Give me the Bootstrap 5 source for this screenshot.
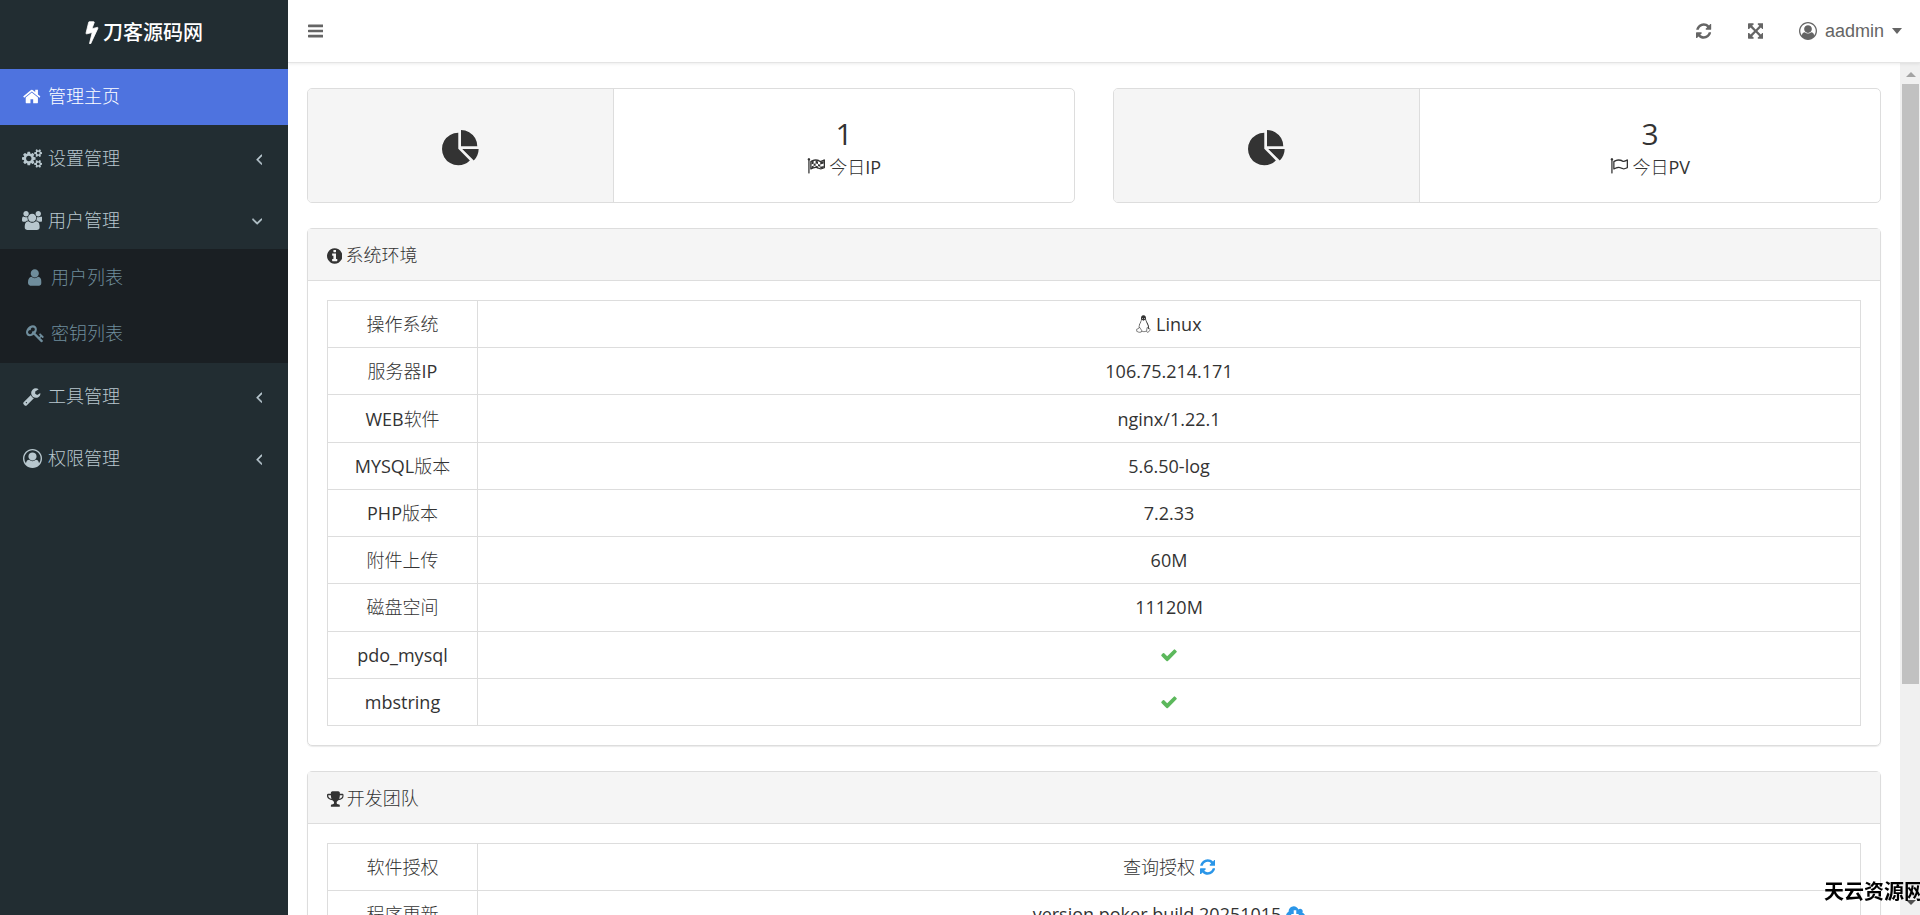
<!DOCTYPE html>
<html lang="zh-CN">
<head>
<meta charset="utf-8">
<meta name="viewport" content="width=device-width, initial-scale=1">
<title>刀客源码网 - 管理主页</title>
<link href="https://cdn.jsdelivr.net/npm/bootstrap@5.3.0/dist/css/bootstrap.min.css" rel="stylesheet">
<style>
  body { font-family: "Open Sans", "Noto Sans CJK SC Light", "Noto Sans CJK SC DemiLight", "Noto Sans CJK SC", sans-serif; font-size: 18px; color: #333; background: #fff; }
  .ico { height: 18px; fill: currentColor; flex: none; }
  a { color: inherit; text-decoration: none; }

  /* Sidebar */
  .side { width: 288px; background: #222d32; color: #b8c7ce; }
  .brand { height: 69px; padding-bottom: 6px; color: #fff; font-family: "Noto Sans CJK SC", sans-serif; font-size: 20px; font-weight: 500; }
  .brand .ico { height: 24px; }
  .menu > li + li { margin-top: 6px; }
  .menu a { height: 56px; padding: 0 26px 1px 21px; }
  .menu a.current { background: #4e73df; color: #fff; }
  .menu-ico { width: 22px; margin-right: 5px; }
  .menu-ico .ico { height: 19px; }
  .submenu { background: #1a1f23; color: #6f8d9c; padding: 1px 0; }
  .submenu a { padding-left: 24px; }

  /* Top bar */
  .topbar { height: 63px; padding: 0 18px 0 20px; color: #656565; border-bottom: 1px solid #e4e4e4; box-shadow: 0 1px 3px rgba(0,0,0,.08); font: 18px "Liberation Sans", Arial, sans-serif; z-index: 1; }
  .topbar button { background: none; border: 0; padding: 0; color: inherit; }
  .topbar .full-btn { margin: 0 36px; }
  .caret-down { border: 5px solid transparent; border-top: 6px solid; border-bottom: 0; margin-left: 8px; }

  /* Page */
  .page { padding: 25px 19px 0; }
  .stats { gap: 38px; }
  .panel { border: 1px solid #ddd; border-radius: 5px; margin-bottom: 25px; }
  .panel-shadow { box-shadow: 0 1px 1px rgba(0,0,0,.08); }
  .stat { height: 115px; margin-bottom: 25px; }
  .stat > div { padding-top: 7px; }
  .stat-icon { width: 40%; background: #f5f5f5; border-right: 1px solid #ddd; }
  .stat-icon .ico { height: 38px; }
  .stat-num { font-size: 30px; line-height: 36px; }
  .stat-label { line-height: 30px; }
  .panel-title { height: 52px; padding: 2px 19px 0; gap: 3px; background: #f5f5f5; border-bottom: 1px solid #ddd; font-size: 18px; }
  .panel-content { padding: 19px; }
  .info { border-color: #ddd; text-align: center; }
  .info-env { height: 426px; }
  .info > tbody > tr > * { padding: 8px; line-height: 30px; vertical-align: middle; color: #333; font-weight: 400; border-color: #ddd; }
  .info th { width: 150px; white-space: nowrap; }
  .info .ico { vertical-align: -2px; }
  .info .ok { color: #5cb85c; }
  .info .act { color: #2b96e8; }

  /* Scroll rail */
  .rail { width: 20px; background: #f0f0f0; padding: 9px 1px 10px 2px; }
  .rail-up, .rail-down { border: 5px solid transparent; }
  .rail-up { border-top: 0; border-bottom-color: #a3a3a3; }
  .rail-down { border-bottom: 0; border-top-color: #505050; }
  .rail-thumb { width: 17px; background: #c1c1c1; margin-top: 7px; height: 72%; }
  .sitemark { right: -4px; bottom: 9px; font-family: "Noto Sans CJK SC", sans-serif; font-size: 20px; line-height: 30px; font-weight: 700; color: #000; z-index: 5; white-space: nowrap; }
</style>
</head>
<body class="vh-100 overflow-hidden d-flex">

<svg class="d-none" aria-hidden="true">
  <symbol id="bolt" viewBox="448 0 896 1792"><path d="M1333 566q18 20 7 44l-540 1157q-13 25-42 25-4 0-14-2-17-5-25.5-19t-4.500-30l197-808-406 101q-4 1-12 1-18 0-31-11-18-15-13-39l201-825q4-14 16-23t28-9h328q19 0 32 12.500t13 29.500q0 8-5 18l-171 463 396-98q8-2 12-2 19 0 34 15z" stroke="#fff" stroke-width="60"/></symbol>
  <symbol id="home" viewBox="64 0 1664 1792"><path d="M1472 992v480q0 26-19 45t-45 19h-384v-384h-256v384h-384q-26 0-45-19t-19-45v-480q0-1 .5-3t.5-3l575-474 575 474q1 2 1 6zm223-69l-62 74q-8 9-21 11h-3q-13 0-21-7l-692-577-692 577q-12 8-24 7-13-2-21-11l-62-74q-8-10-7-23.500t11-21.500l719-599q32-26 76-26t76 26l244 204v-195q0-14 9-23t23-9h192q14 0 23 9t9 23v408l219 182q10 8 11 21.500t-7 23.500z"/></symbol>
  <symbol id="cogs" viewBox="-64 0 1920 1792"><path d="M832 896q0-106-75-181t-181-75-181 75-75 181 75 181 181 75 181-75 75-181zm768 512q0-52-38-90t-90-38-90 38-38 90q0 53 37.500 90.500t90.500 37.500 90.500-37.500 37.500-90.500zm0-1024q0-52-38-90t-90-38-90 38-38 90q0 53 37.500 90.500t90.500 37.500 90.500-37.500 37.500-90.500zm-384 421v185q0 10-7 19.500t-16 10.500l-155 24q-11 35-32 76 34 48 90 115 7 11 7 20 0 12-7 19-23 30-82.500 89.500t-78.500 59.500q-11 0-21-7l-115-90q-37 19-77 31-11 108-23 155-7 24-30 24h-186q-11 0-20-7.500t-10-17.500l-23-153q-34-10-75-31l-118 89q-7 7-20 7-11 0-21-8-144-133-144-160 0-9 7-19 10-14 41-53t47-61q-23-44-35-82l-152-24q-10-1-17-9.500t-7-19.500v-185q0-10 7-19.500t16-10.500l155-24q11-35 32-76-34-48-90-115-7-11-7-20 0-12 7-20 22-30 82-89t79-59q11 0 21 7l115 90q34-18 77-32 11-108 23-154 7-24 30-24h186q11 0 20 7.500t10 17.500l23 153q34 10 75 31l118-89q8-7 20-7 11 0 21 8 144 133 144 160 0 8-7 19-12 16-42 54t-45 60q23 48 34 82l152 23q10 2 17 10.500t7 19.500zm640 533v140q0 16-149 31-12 27-30 52 51 113 51 138 0 4-4 7-122 71-124 71-8 0-46-47t-52-68q-20 2-30 2t-30-2q-14 21-52 68t-46 47q-2 0-124-71-4-3-4-7 0-25 51-138-18-25-30-52-149-15-149-31v-140q0-16 149-31 13-29 30-52-51-113-51-138 0-4 4-7 4-2 35-20t59-34 30-16q8 0 46 46.500t52 67.500q20-2 30-2t30 2q51-71 92-112l6-2q4 0 124 70 4 3 4 7 0 25-51 138 17 23 30 52 149 15 149 31zm0-1024v140q0 16-149 31-12 27-30 52 51 113 51 138 0 4-4 7-122 71-124 71-8 0-46-47t-52-68q-20 2-30 2t-30-2q-14 21-52 68t-46 47q-2 0-124-71-4-3-4-7 0-25 51-138-18-25-30-52-149-15-149-31v-140q0-16 149-31 13-29 30-52-51-113-51-138 0-4 4-7 4-2 35-20t59-34 30-16q8 0 46 46.500t52 67.500q20-2 30-2t30 2q51-71 92-112l6-2q4 0 124 70 4 3 4 7 0 25-51 138 17 23 30 52 149 15 149 31z"/></symbol>
  <symbol id="users" viewBox="-64 0 1920 1792"><path d="M529 896q-162 5-265 128h-134q-82 0-138-40.500t-56-118.500q0-353 124-353 6 0 43.500 21t97.500 42.500 119 21.500q67 0 133-23-5 37-5 66 0 139 81 256zm1071 637q0 120-73 189.500t-194 69.500h-874q-121 0-194-69.500t-73-189.500q0-53 3.500-103.500t14-109 26.500-108.500 43-97.500 62-81 85.500-53.500 111.500-20q10 0 43 21.500t73 48 107 48 135 21.500 135-21.500 107-48 73-48 43-21.500q61 0 111.500 20t85.500 53.500 62 81 43 97.500 26.500 108.500 14 109 3.500 103.500zm-1024-1277q0 106-75 181t-181 75-181-75-75-181 75-181 181-75 181 75 75 181zm704 384q0 159-112.500 271.500t-271.500 112.500-271.500-112.500-112.500-271.500 112.500-271.500 271.500-112.500 271.500 112.500 112.500 271.500zm576 225q0 78-56 118.500t-138 40.500h-134q-103-123-265-128 81-117 81-256 0-29-5-66 66 23 133 23 59 0 119-21.500t97.500-42.500 43.500-21q124 0 124 353zm-128-609q0 106-75 181t-181 75-181-75-75-181 75-181 181-75 181 75 75 181z"/></symbol>
  <symbol id="user" viewBox="256 0 1280 1792"><path d="M1536 1399q0 109-62.500 187t-150.500 78h-854q-88 0-150.500-78t-62.500-187q0-85 8.500-160.500t31.500-152 58.500-131 94-89 134.500-34.500q131 128 313 128t313-128q76 0 134.500 34.500t94 89 58.500 131 31.500 152 8.500 160.500zm-256-887q0 159-112.500 271.500t-271.500 112.500-271.500-112.500-112.500-271.500 112.500-271.500 271.500-112.500 271.500 112.500 112.500 271.500z"/></symbol>
  <symbol id="key" viewBox="0 0 1792 1792"><path d="M832 512q0-80-56-136t-136-56-136 56-56 136q0 42 19 83-41-19-83-19-80 0-136 56t-56 136 56 136 136 56 136-56 56-136q0-42-19-83 41 19 83 19 80 0 136-56t56-136zm851 704q0 17-49 66t-66 49q-9 0-28.500-16t-36.500-33-38.500-40-24.500-26l-96 96 220 220q28 28 28 68 0 42-39 81t-81 39q-40 0-68-28l-671-671q-176 131-365 131-163 0-265.500-102.500t-102.500-265.500q0-160 95-313t248-248 313-95q163 0 265.500 102.500t102.500 265.500q0 189-131 365l355 355 96-96q-3-3-26-24.500t-40-38.500-33-36.500-16-28.500q0-17 49-66t66-49q13 0 23 10 6 6 46 44.500t82 79.500 86.500 86 73 78 28.500 41z"/></symbol>
  <symbol id="wrench" viewBox="64 0 1664 1792"><path d="M448 1472q0-26-19-45t-45-19-45 19-19 45 19 45 45 19 45-19 19-45zm644-420l-682 682q-37 37-90 37-52 0-91-37l-106-108q-38-36-38-90 0-53 38-91l681-681q39 98 114.500 173.500t173.500 114.500zm634-435q0 39-23 106-47 134-164.500 217.500t-258.500 83.500q-185 0-316.500-131.500t-131.500-316.500 131.500-316.500 316.500-131.500q58 0 121.500 16.500t107.500 46.500q16 11 16 28t-16 28l-293 169v224l193 107q5-3 79-48.500t135.500-81 70.500-35.500q15 0 23.500 10t8.500 25z"/></symbol>
  <symbol id="person" viewBox="0 0 1792 1792"><path d="M896 0q182 0 348 71t286 191 191 286 71 348q0 181-70.500 347t-190.500 286-286 191.500-349 71.500-349-71-285.500-191.500-190.500-286-71-347.500 71-348 191-286 286-191 348-71zm619 1351q149-205 149-455 0-156-61-298t-164-245-245-164-298-61-298 61-245 164-164 245-61 298q0 250 149 455 66-327 306-327 131 128 313 128t313-128q240 0 306 327zm-235-647q0-159-112.500-271.500t-271.500-112.500-271.500 112.500-112.500 271.500 112.500 271.500 271.500 112.500 271.500-112.500 112.500-271.500z"/></symbol>
  <symbol id="left" viewBox="576 0 640 1792"><path d="M1203 544q0 13-10 23l-393 393 393 393q10 10 10 23t-10 23l-50 50q-10 10-23 10t-23-10l-466-466q-10-10-10-23t10-23l466-466q10-10 23-10t23 10l50 50q10 10 10 23z" stroke="currentColor" stroke-width="50"/></symbol>
  <symbol id="down" viewBox="384 0 1024 1792"><path d="M1395 736q0 13-10 23l-466 466q-10 10-23 10t-23-10l-466-466q-10-10-10-23t10-23l50-50q10-10 23-10t23 10l393 393 393-393q10-10 23-10t23 10l50 50q10 10 10 23z" stroke="currentColor" stroke-width="50"/></symbol>
  <symbol id="bars" viewBox="128 0 1536 1792"><path d="M1664 1344v128q0 26-19 45t-45 19h-1408q-26 0-45-19t-19-45v-128q0-26 19-45t45-19h1408q26 0 45 19t19 45zm0-512v128q0 26-19 45t-45 19h-1408q-26 0-45-19t-19-45v-128q0-26 19-45t45-19h1408q26 0 45 19t19 45zm0-512v128q0 26-19 45t-45 19h-1408q-26 0-45-19t-19-45v-128q0-26 19-45t45-19h1408q26 0 45 19t19 45z"/></symbol>
  <symbol id="refresh" viewBox="128 0 1536 1792"><path d="M1639 1056q0 5-1 7-64 268-268 434.500t-478 166.500q-146 0-282.500-55t-243.500-157l-129 129q-19 19-45 19t-45-19-19-45v-448q0-26 19-45t45-19h448q26 0 45 19t19 45-19 45l-137 137q71 66 161 102t187 36q134 0 250-65t186-179q11-17 53-117 8-23 30-23h192q13 0 22.500 9.500t9.500 22.500zm25-800v448q0 26-19 45t-45 19h-448q-26 0-45-19t-19-45 19-45l138-138q-148-137-349-137-134 0-250 65t-186 179q-11 17-53 117-8 23-30 23h-199q-13 0-22.500-9.500t-9.500-22.500v-7q65-268 270-434.500t480-166.500q146 0 284 55.500t245 156.500l130-129q19-19 45-19t45 19 19 45z"/></symbol>
  <symbol id="expand" viewBox="128 0 1536 1792"><path d="M1411 541l-355 355 355 355 144-144q29-31 70-14 39 17 39 59v448q0 26-19 45t-45 19h-448q-42 0-59-40-17-39 14-69l144-144-355-355-355 355 144 144q31 30 14 69-17 40-59 40h-448q-26 0-45-19t-19-45v-448q0-42 40-59 39-17 69 14l144 144 355-355-355-355-144 144q-19 19-45 19-12 0-24-5-40-17-40-59v-448q0-26 19-45t45-19h448q42 0 59 40 17 39-14 69l-144 144 355 355 355-355-144-144q-31-30-14-69 17-40 59-40h448q26 0 45 19t19 45v448q0 42-39 59-13 5-25 5-26 0-45-19z"/></symbol>
  <symbol id="pie" viewBox="0 0 1792 1792"><path d="M768 890l546 546q-106 108-247.500 168t-298.500 60q-209 0-385.500-103t-279.500-279.500-103-385.500 103-385.500 279.500-279.500 385.500-103v762zm187 6h773q0 157-60 298.500t-168 247.500zm709-128h-768v-768q209 0 385.500 103t279.500 279.500 103 385.500z"/></symbol>
  <symbol id="flag" viewBox="0 0 1792 1792"><path d="M1664 926v-617q-169 91-306 91-82 0-145-32-100-49-184-76.500t-178-27.500q-173 0-403 127v599q245-113 433-113 55 0 103.500 7.500t98 26 77 31 82.500 39.500l28 14q44 22 101 22 120 0 293-92zm-1344-798q0 35-17.500 64t-46.500 46v1266q0 14-9 23t-23 9h-64q-14 0-23-9t-9-23v-1266q-29-17-46.500-46t-17.500-64q0-53 37.500-90.500t90.500-37.500 90.500 37.500 37.500 90.500zm1472 64v763q0 39-35 57-10 5-17 9-218 116-369 116-88 0-158-35l-28-14q-64-33-99-48t-91-29-114-14q-102 0-235.500 44t-228.500 102q-15 9-33 9-16 0-32-8-32-19-32-56v-742q0-35 31-55 35-21 78.500-42.500t114-52 152.500-49.500 155-19q112 0 209 31t209 86q38 19 89 19 122 0 310-112 22-12 31-17 31-16 62 2 31 20 31 55z"/></symbol>
  <symbol id="checks" viewBox="0 0 1792 1792"><use href="#flag" width="1792" height="1792"/><path d="M448 640q110-55 210-75V270q-110 28-210 80zm0 400v-200q110-50 210-70v200q-110 22-210 70zM658 565q110-20 200-5v215q-90-20-200-5zM858 275q120 15 240 70v245q-120-55-240-30zm240 315q100 50 220 50v210q-120 0-220-60zM858 775q130 15 240 80v180q-120-60-240-70zm460-375q180-10 346-91v250q-170 85-346 81zm0 450q180-5 346-90v180q-180 95-346 90z"/></symbol>
  <symbol id="info" viewBox="128 0 1536 1792"><path d="M1152 1376v-160q0-14-9-23t-23-9h-96v-512q0-14-9-23t-23-9h-320q-14 0-23 9t-9 23v160q0 14 9 23t23 9h96v320h-96q-14 0-23 9t-9 23v160q0 14 9 23t23 9h448q14 0 23-9t9-23zm-128-896v-160q0-14-9-23t-23-9h-192q-14 0-23 9t-9 23v160q0 14 9 23t23 9h192q14 0 23-9t9-23zm640 416q0 209-103 385.500t-279.500 279.500-385.500 103-385.500-103-279.500-279.500-103-385.500 103-385.500 279.500-279.500 385.500-103 385.500 103 279.500 279.500 103 385.500z"/></symbol>
  <symbol id="trophy" viewBox="64 0 1664 1792"><path d="M522 883q-74-162-74-371h-256v96q0 78 94.500 162t235.500 113zm1078-275v-96h-256q0 209-74 371 141-29 235.500-113t94.500-162zm128-128v128q0 71-41.500 143t-112 130-173 97.500-215.500 44.500q-42 54-95 95-38 34-52.500 72.500t-14.500 89.500q0 54 30.500 91t97.500 37q75 0 133.500 45.500t58.500 114.500v64q0 14-9 23t-23 9h-832q-14 0-23-9t-9-23v-64q0-69 58.500-114.500t133.500-45.500q67 0 97.500-37t30.500-91q0-51-14.500-89.500t-52.500-72.500q-53-41-95-95-113-5-215.500-44.500t-173-97.500-112-130-41.500-143v-128q0-40 28-68t68-28h288v-96q0-66 47-113t113-47h576q66 0 113 47t47 113v96h288q40 0 68 28t28 68z"/></symbol>
  <symbol id="check" viewBox="0 0 1792 1792"><path d="M1671 566q0 40-28 68l-724 724-136 136q-28 28-68 28t-68-28l-136-136-362-362q-28-28-28-68t28-68l136-136q28-28 68-28t68 28l294 295 656-657q28-28 68-28t68 28l136 136q28 28 28 68z"/></symbol>
  <symbol id="cloud" viewBox="-64 0 1920 1792"><path d="M1216 928q0-14-9-23t-23-9h-224v-352q0-13-9.500-22.500t-22.500-9.500h-192q-13 0-22.500 9.500t-9.500 22.500v352h-224q-13 0-22.500 9.500t-9.500 22.500q0 14 9 23l352 352q9 9 23 9t23-9l351-351q10-12 10-24zm640 224q0 159-112.500 271.500t-271.500 112.500h-1088q-185 0-316.500-131.500t-131.500-316.500q0-130 70-240t188-165q-2-30-2-43 0-212 150-362t362-150q156 0 285.500 87t188.500 231q71-62 166-62 106 0 181 75t75 181q0 76-41 138 130 31 213.500 135.500t83.500 238.500z"/></symbol>
  <symbol id="tux" viewBox="0 0 15 18"><path d="M5 4Q4.800.4 7.400.3 10.200.2 10 4q.1 2 1.800 4.200 1.800 2.800 1 5.600l-.8.400Q12.500 10.800 10.600 8 9.600 6 9.300 4.600L7.400 5.700 5.700 4.600Q5.400 6.800 4.300 8.600 3 11 3.400 13L2.600 12.600Q2.400 10.400 3.900 8 5.200 6 5 4z"/><path d="M.7 14.200l1.900-.7 1-1.200 2.100 3.200-.5 1.600-2.200.2-2.300-1zM14.200 14.900l-1.300-2-1.900-.3-.4 3.600.8 1.200 1.500-.7zM5.500 16.200q2.400 1 5 0" fill="none" stroke="currentColor" stroke-width=".6"/><path d="M6.200 3.200h.8v.8h-.8zM8 3.200h.8v.8H8z" fill="#fff"/></symbol>
</svg>

<aside class="side d-flex flex-column flex-shrink-0">
  <a href="#" class="brand d-flex align-items-center justify-content-center gap-1"><svg class="ico" viewBox="0 0 14 24"><use href="#bolt" width="14" height="24"/></svg>刀客源码网</a>
  <ul class="menu list-unstyled m-0">
    <li><a href="#" class="current d-flex align-items-center"><span class="menu-ico d-flex justify-content-center"><svg class="ico" viewBox="0 0 1664 1792"><use href="#home"/></svg></span>管理主页</a></li>
    <li><a href="#" class="d-flex align-items-center"><span class="menu-ico d-flex justify-content-center"><svg class="ico" viewBox="0 0 1920 1792"><use href="#cogs"/></svg></span>设置管理<svg class="ico ms-auto" viewBox="0 0 640 1792"><use href="#left"/></svg></a></li>
    <li><a href="#" class="d-flex align-items-center" aria-expanded="true"><span class="menu-ico d-flex justify-content-center"><svg class="ico" viewBox="0 0 1920 1792"><use href="#users"/></svg></span>用户管理<svg class="ico ms-auto" viewBox="0 0 1024 1792"><use href="#down"/></svg></a>
      <ul class="submenu list-unstyled">
        <li><a href="#" class="d-flex align-items-center"><span class="menu-ico d-flex justify-content-center"><svg class="ico" viewBox="0 0 1280 1792"><use href="#user"/></svg></span>用户列表</a></li>
        <li><a href="#" class="d-flex align-items-center"><span class="menu-ico d-flex justify-content-center"><svg class="ico" viewBox="0 0 1792 1792"><use href="#key"/></svg></span>密钥列表</a></li>
      </ul></li>
    <li><a href="#" class="d-flex align-items-center"><span class="menu-ico d-flex justify-content-center"><svg class="ico" viewBox="0 0 1664 1792"><use href="#wrench"/></svg></span>工具管理<svg class="ico ms-auto" viewBox="0 0 640 1792"><use href="#left"/></svg></a></li>
    <li><a href="#" class="d-flex align-items-center"><span class="menu-ico d-flex justify-content-center"><svg class="ico" viewBox="0 0 1792 1792"><use href="#person"/></svg></span>权限管理<svg class="ico ms-auto" viewBox="0 0 640 1792"><use href="#left"/></svg></a></li>
  </ul>
</aside>

<div class="flex-grow-1 d-flex flex-column overflow-hidden">
  <header class="topbar d-flex align-items-center flex-shrink-0">
    <button type="button" class="d-flex" aria-label="菜单"><svg class="ico" viewBox="0 0 1536 1792"><use href="#bars"/></svg></button>
    <button type="button" class="d-flex ms-auto" aria-label="刷新"><svg class="ico" viewBox="0 0 1536 1792"><use href="#refresh"/></svg></button>
    <button type="button" class="full-btn d-flex" aria-label="全屏"><svg class="ico" viewBox="0 0 1536 1792"><use href="#expand"/></svg></button>
    <button type="button" class="d-flex align-items-center"><svg class="ico me-2" viewBox="0 0 1792 1792"><use href="#person"/></svg>aadmin<span class="caret-down"></span></button>
  </header>

  <div class="flex-grow-1 d-flex overflow-hidden">
    <main class="page flex-grow-1 overflow-hidden">
      <div class="stats d-flex">
        <section class="panel stat d-flex flex-fill w-50 overflow-hidden">
          <div class="stat-icon d-flex align-items-center justify-content-center"><svg class="ico" viewBox="0 0 1792 1792"><use href="#pie"/></svg></div>
          <div class="flex-grow-1 d-flex flex-column align-items-center justify-content-center">
            <div class="stat-num">1</div>
            <div class="stat-label d-flex align-items-center gap-1"><svg class="ico" viewBox="0 0 1792 1792"><use href="#checks"/></svg>今日IP</div>
          </div>
        </section>
        <section class="panel stat d-flex flex-fill w-50 overflow-hidden">
          <div class="stat-icon d-flex align-items-center justify-content-center"><svg class="ico" viewBox="0 0 1792 1792"><use href="#pie"/></svg></div>
          <div class="flex-grow-1 d-flex flex-column align-items-center justify-content-center">
            <div class="stat-num">3</div>
            <div class="stat-label d-flex align-items-center gap-1"><svg class="ico" viewBox="0 0 1792 1792"><use href="#flag"/></svg>今日PV</div>
          </div>
        </section>
      </div>

      <section class="panel panel-shadow">
        <h2 class="panel-title d-flex align-items-center m-0 fw-normal"><svg class="ico" viewBox="0 0 1536 1792"><use href="#info"/></svg>系统环境</h2>
        <div class="panel-content">
          <table class="table table-bordered info info-env mb-0">
            <tbody>
              <tr><th>操作系统</th><td><svg class="ico" viewBox="0 0 15 18"><use href="#tux"/></svg> Linux</td></tr>
              <tr><th>服务器IP</th><td>106.75.214.171</td></tr>
              <tr><th>WEB软件</th><td>nginx/1.22.1</td></tr>
              <tr><th>MYSQL版本</th><td>5.6.50-log</td></tr>
              <tr><th>PHP版本</th><td>7.2.33</td></tr>
              <tr><th>附件上传</th><td>60M</td></tr>
              <tr><th>磁盘空间</th><td>11120M</td></tr>
              <tr><th>pdo_mysql</th><td><svg class="ico ok" viewBox="0 0 1792 1792"><use href="#check"/></svg></td></tr>
              <tr><th>mbstring</th><td><svg class="ico ok" viewBox="0 0 1792 1792"><use href="#check"/></svg></td></tr>
            </tbody>
          </table>
        </div>
      </section>

      <section class="panel panel-shadow">
        <h2 class="panel-title d-flex align-items-center m-0 fw-normal"><svg class="ico" viewBox="0 0 1664 1792"><use href="#trophy"/></svg>开发团队</h2>
        <div class="panel-content">
          <table class="table table-bordered info mb-0">
            <tbody>
              <tr><th>软件授权</th><td>查询授权 <a href="#" aria-label="查询"><svg class="ico act" viewBox="0 0 1536 1792"><use href="#refresh"/></svg></a></td></tr>
              <tr><th>程序更新</th><td>version poker build 20251015 <a href="#" aria-label="更新"><svg class="ico act" viewBox="0 0 1920 1792"><use href="#cloud"/></svg></a></td></tr>
            </tbody>
          </table>
        </div>
      </section>
    </main>

    <div class="rail d-flex flex-column align-items-center flex-shrink-0" aria-hidden="true">
      <span class="rail-up"></span>
      <span class="rail-thumb"></span>
      <span class="rail-down mt-auto"></span>
    </div>
  </div>
</div>

<div class="sitemark position-fixed">天云资源网</div>

<script src="https://cdn.jsdelivr.net/npm/bootstrap@5.3.0/dist/js/bootstrap.bundle.min.js"></script>
</body>
</html>
